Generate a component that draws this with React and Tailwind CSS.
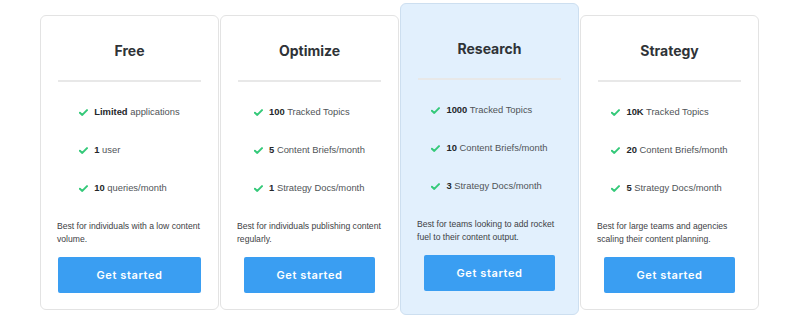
import React from "react";

const plans = [
  {
    name: "Free",
    features: [
      ["Limited", "applications"],
      ["1", "user"],
      ["10", "queries/month"],
    ],
    desc: ["Best for individuals with a low content", "volume."],
    wide: true,
  },
  {
    name: "Optimize",
    features: [
      ["100", "Tracked Topics"],
      ["5", "Content Briefs/month"],
      ["1", "Strategy Docs/month"],
    ],
    desc: ["Best for individuals publishing content", "regularly."],
  },
  {
    name: "Research",
    features: [
      ["1000", "Tracked Topics"],
      ["10", "Content Briefs/month"],
      ["3", "Strategy Docs/month"],
    ],
    desc: ["Best for teams looking to add rocket", "fuel to their content output."],
    featured: true,
  },
  {
    name: "Strategy",
    features: [
      ["10K", "Tracked Topics"],
      ["20", "Content Briefs/month"],
      ["5", "Strategy Docs/month"],
    ],
    desc: ["Best for large teams and agencies", "scaling their content planning."],
  },
];

function Check() {
  return (
    <svg width="9" height="7" viewBox="0 0 9 7" className="shrink-0">
      <path d="M0.9 3.7 L3.3 5.9 L8 1.1" fill="none" stroke="#34c979" strokeWidth="2" strokeLinecap="round" strokeLinejoin="round" />
    </svg>
  );
}

function PlanCard({ plan }) {
  return (
    <div
      className={
        plan.featured
          ? "w-[179px] shrink-0 mt-[3px] rounded-[6px] border border-[#cddff0] bg-[#e2f0fd] px-[16px] pt-[35px] pb-[23px]"
          : "w-[179px] shrink-0 mt-[15px] rounded-[6px] border border-[#e3e3e3] bg-white px-[16px] pt-[25px] pb-[16px]"
      }
    >
      <h2 className="text-center text-[14px] leading-[20px] font-bold text-[#2f3337] font-['Inter',sans-serif]">
        {plan.name}
      </h2>
      <div className="mt-[19px] h-[2px] bg-[#e8e8e8] mx-[1px]" />
      <div className="flex justify-center mt-[22px]">
        <ul className="flex flex-col gap-[22px]">
          {plan.features.map(([b, t]) => (
            <li key={t} className="flex items-center gap-[6px] h-[16px] text-[9.4px] text-[#505458] whitespace-nowrap">
              <Check />
              <span>
                <b className="font-bold text-[#24272a]">{b}</b> {t}
              </span>
            </li>
          ))}
        </ul>
      </div>
      <p className="mt-[24px] text-[8.6px] leading-[13px] text-[#3d4145] whitespace-nowrap">
        {plan.desc[0]}
        <br />
        {plan.desc[1]}
      </p>
      <div className={plan.wide ? "mt-[11px] px-[1px]" : "mt-[11px] px-[7px]"}>
        <button className="w-full h-[36px] rounded-[2px] bg-[#3a9ef2] text-white text-[11px] font-semibold tracking-[0.6px] font-['Inter',sans-serif]">
          Get started
        </button>
      </div>
    </div>
  );
}

export default function App() {
  return (
    <div className="w-[800px] h-[327px] bg-white flex items-start gap-px pl-[40px] font-['Liberation_Sans',Arial,sans-serif]">
      {plans.map((p) => (
        <PlanCard key={p.name} plan={p} />
      ))}
    </div>
  );
}
